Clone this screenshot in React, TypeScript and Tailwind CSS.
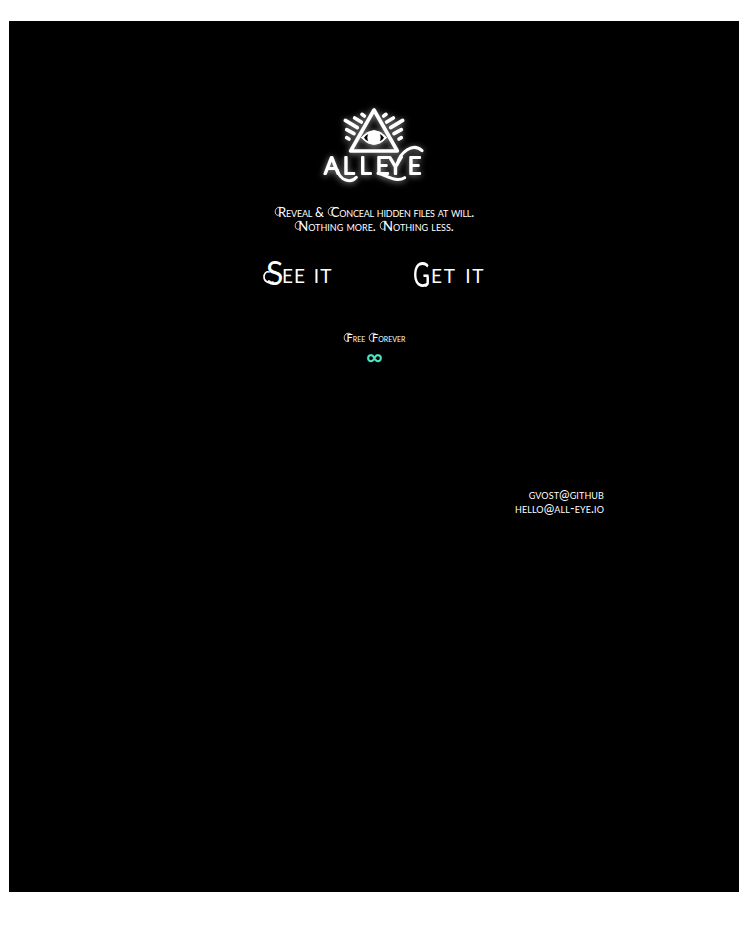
import type { ReactNode } from "react";

function Logo() {
  return (
    <svg
      width="120"
      height="95"
      viewBox="0 0 360 285"
      fill="none"
      stroke="white"
      strokeWidth="11"
      strokeLinecap="round"
      strokeLinejoin="round"
      className="drop-shadow-[0_1px_3px_rgba(255,255,255,0.6)]"
      aria-label="Alleye"
    >
      <path d="M180 36 L110 159 H250 Z" />
      <path d="M142 119 Q180 76 218 119 Q180 160 142 119Z" fill="white" strokeWidth="3" />
      <path d="M150 119 Q155 111 163 108 Q157 119 163 130 Q155 127 150 119Z M210 119 Q205 111 197 108 Q203 119 197 130 Q205 127 210 119Z" fill="black" stroke="none" />
      <path d="M144 49 L151 54 M122 60 L142 72 M94 67 L130 89 M98 95 L120 107 M98 119 L105 123" />
      <path d="M216 49 L209 54 M238 60 L218 72 M266 67 L230 89 M262 95 L240 107 M262 119 L255 123" />
      <path d="M70 216 C78 248 111 257 127 238 M192 226 C220 232 246 255 272 239 M250 198 C258 164 296 132 324 158" strokeWidth="9" />
      <text
        x="31 87 137 186 224 282"
        y="227"
        fill="white"
        strokeWidth="6.5"
        className="font-['Lato'] text-[68px] font-light"
      >
        ALLEYE
      </text>
    </svg>
  );
}

// A capital with an ornamental hairline curling off its left side.
function Cap({ children }: { children: ReactNode }) {
  return (
    <span className="relative inline-block pl-[4px] text-[1.05em] leading-none">
      <svg
        className="absolute left-0 top-0"
        width="9"
        height="13"
        viewBox="0 0 9 14"
        fill="none"
        stroke="currentColor"
        strokeWidth="0.9"
      >
        <path d="M8 2 C4 0 1 3 1 6 C1 10 4 11 6 9" />
      </svg>
      {children}
    </span>
  );
}

export default function App() {
  return (
    <div className="h-[934px] w-[748px] bg-white px-[9px] pt-[21px] font-['Lato',sans-serif] text-white">
      <main className="flex h-[871px] flex-col items-center bg-black pt-[77px] [font-variant-caps:small-caps]">
        <Logo />
        <div className="mt-[13px] flex flex-col items-center whitespace-nowrap text-[12.5px] leading-[14px]">
          <p className="flex h-[14px] items-baseline whitespace-pre tracking-[-0.23px]">
            <Cap>R</Cap>eveal &amp; <Cap>C</Cap>onceal hidden files at will.
          </p>
          <p className="flex h-[14px] items-baseline whitespace-pre">
            <Cap>N</Cap>othing more. <Cap>N</Cap>othing less.
          </p>
        </div>
        <nav className="mt-[21px] flex h-[36px] gap-[80px] whitespace-pre text-[27px] leading-[36px]">
          <a className="relative flex w-[70px]">
            <svg className="absolute left-0 top-[10px]" width="18" height="20" viewBox="0 0 18 20" fill="none" stroke="currentColor" strokeWidth="1.6" strokeLinecap="round">
              <path d="M10 17 C5 19 1 16 1 12 C1 9 3 6 6 7" />
            </svg>
            <span className="w-[19px] pl-[3px] text-[32px]">S</span>
            <span className="tracking-[1px]">ee it</span>
          </a>
          <a className="relative flex w-[72px]">
            <svg className="absolute left-[11px] top-[21px]" width="6" height="12" viewBox="0 0 6 12" fill="none" stroke="currentColor" strokeWidth="1.7" strokeLinecap="round">
              <path d="M4 1 V6 Q4 9 2 10" />
            </svg>
            <span className="w-[18px]">
              <span className="inline-block origin-left scale-x-[0.66] text-[35px]">G</span>
            </span>
            <span className="tracking-[1.7px]">et it</span>
          </a>
        </nav>
        <section className="mt-[40px] flex flex-col items-center">
          <p className="flex h-[14px] items-baseline whitespace-pre text-[10.5px] leading-[14px]">
            <Cap>F</Cap>ree <Cap>F</Cap>orever
          </p>
          <span className="mt-px h-[20px] pl-px text-[23px] font-semibold leading-[20px] text-[#50e3c2]">∞</span>
        </section>
        <footer className="mt-[122px] w-[460px] text-right text-[12.6px] leading-[14px] tracking-[0.1px]">
          <p>gvost@github</p>
          <p>hello@all-eye.io</p>
        </footer>
      </main>
    </div>
  );
}
